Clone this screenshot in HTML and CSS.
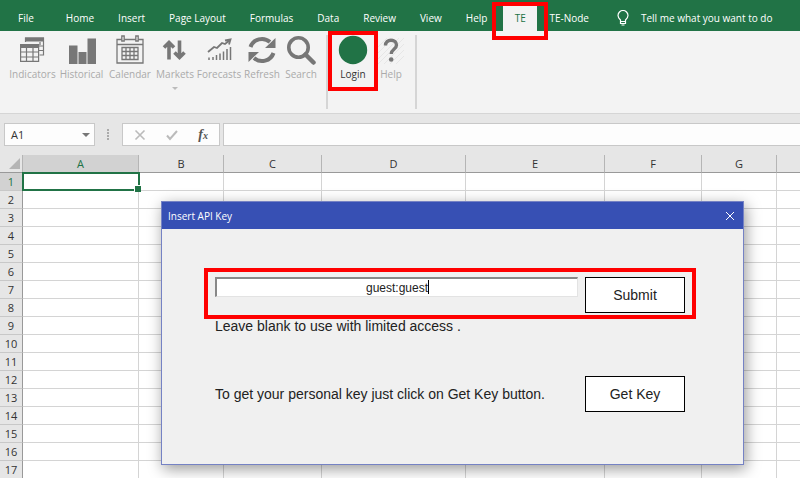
FILE: index.html
```html
<!DOCTYPE html>
<html lang="en">
<head>
<meta charset="utf-8">
<title>Insert API Key</title>
<link rel="stylesheet" href="styles.css">
</head>
<body>
<nav class="tabs">
  <a class="tab file" href="#">File</a>
  <a class="tab" href="#">Home</a>
  <a class="tab" href="#">Insert</a>
  <a class="tab" href="#">Page Layout</a>
  <a class="tab" href="#">Formulas</a>
  <a class="tab" href="#">Data</a>
  <a class="tab" href="#">Review</a>
  <a class="tab" href="#">View</a>
  <a class="tab" href="#">Help</a>
  <a class="tab active marked" href="#">TE</a>
  <a class="tab" href="#">TE-Node</a>
  <a class="tab tell" href="#">
    <svg width="12" height="16" viewBox="0 0 12 16" fill="none" stroke="#fff" stroke-width="1.2"><path d="M3.5 11.5V10C2 8.500 1 7.300 1 5.500a5 5 0 0 1 10 0C11 7.300 10 8.500 8.500 10v1.500zM3.500 11.500v2h5v-2M4.500 15h3"/></svg>
    Tell me what you want to do</a>
</nav>

<div class="ribbon">
  <div class="group data">
    <button class="tool">
      <svg width="30" height="30" viewBox="0 0 30 30" fill="none" stroke="#777" stroke-width="1.200"><path d="M7.500 7V3h18v17h-4M25 11h-4M25 15.500h-4M22 7v3"/><path d="M7 2.500h19v4H7zM2 9h19v4H2z" fill="#777" stroke="none"/><path d="M2.600 9v17.400h18V9M3 17h17M3 22h17M8.500 13v13M15 13v13"/></svg>
      <span>Indicators</span></button>
    <button class="tool">
      <svg width="30" height="30" viewBox="0 0 30 30" fill="#777"><path d="M2 10.500h8.500V29H2zM11.500 17h8v12h-8zM20.500 3.500H29V29h-8.500z"/></svg>
      <span>Historical</span></button>
    <button class="tool">
      <svg width="30" height="30" viewBox="0 0 30 30" fill="none" stroke="#777" stroke-width="1.300"><path d="M2 4.500h26V28H2zM2 9.500h26"/><path d="M6.800 1h2.400v5H6.800zM20.800 1h2.400v5h-2.400z" fill="#f3f3f3"/><path d="M7 12.500h16v12H7zM7 16.500h16M7 20.500h16M11 12.500v12M15 12.500v12M19 12.500v12"/></svg>
      <span>Calendar</span></button>
    <button class="tool">
      <svg width="30" height="30" viewBox="0 0 30 30" fill="none" stroke="#777" stroke-width="3.600"><path d="M9 24.500V8M4 12.500 9 7.500l5 5M19.500 5.500V22M14.500 17.500l5 5 5-5"/></svg>
      <span>Markets</span><i class="arrow"></i></button>
    <button class="tool">
      <svg width="30" height="30" viewBox="0 0 30 30" fill="none" stroke="#777" stroke-width="1.800"><path d="m4 17 6-5 3 1 5-5 3 1 5-4M21 5.500l5.500-1-1.500 5"/><path d="M5 22.500V25M9 22v3M12.500 20v5M16 18.500V25M19.500 16.500V25M23 14v11M26.500 12v13" stroke-width="1.500"/></svg>
      <span>Forecasts</span></button>
    <button class="tool">
      <svg width="30" height="30" viewBox="0 0 30 30" fill="none" stroke="#777" stroke-width="4"><path d="M3.500 12A12 11.500 0 0 1 23 7M26.500 18A12 11.500 0 0 1 7 23"/><path d="M28.500 3v10H18zM1.500 27V17H12z" fill="#777" stroke="none"/></svg>
      <span>Refresh</span></button>
    <button class="tool">
      <svg width="30" height="30" viewBox="0 0 30 30" fill="none" stroke="#777"><circle cx="12.500" cy="12.500" r="9.700" stroke-width="3.600"/><path d="m19.500 19.500 8 8" stroke-width="4.500" stroke-linecap="round"/></svg>
      <span>Search</span></button>
  </div>
  <div class="group account">
    <button class="tool login marked">
      <svg width="30" height="30" viewBox="0 0 30 30"><circle cx="15" cy="15" r="14.200" fill="#217346"/></svg>
      <span>Login</span></button>
    <button class="tool">
      <svg width="30" height="30" viewBox="0 0 30 30" fill="none"><path d="m2 12 9-9M2 18 17 3M2 24 23 3M2 29 28 3M8 29 28 9M14 29l14-14M20 29l8-8" stroke="#e6e6e6"/><path d="M9.500 10.500c0-3.500 2.500-5.300 5.500-5.300 3.200 0 5.500 2 5.500 4.800 0 4.500-5.300 4-5.300 9" stroke="#777" stroke-width="3.400"/><circle cx="15.200" cy="24.500" r="2.300" fill="#777"/></svg>
      <span>Help</span></button>
  </div>
</div>

<div class="formula-bar">
  <button class="name-box" aria-label="Name box">A1<i class="arrow dark"></i></button>
  <svg class="grip" width="3" height="12" viewBox="0 0 3 12" fill="#aaa"><path d="M0 0h2v2H0zM0 3h2v2H0zM0 6h2v2H0zM0 9h2v2H0z"/></svg>
  <div class="entry-tools">
    <button aria-label="Cancel"><svg width="12" height="12" viewBox="0 0 12 12" fill="none" stroke="#bbb" stroke-width="1.600"><path d="m1.500 1.500 9 9m0-9-9 9"/></svg></button>
    <button aria-label="Enter"><svg width="12" height="12" viewBox="0 0 12 12" fill="none" stroke="#bbb" stroke-width="2"><path d="m1 6.500 3 3.500 7-8"/></svg></button>
    <button class="fx" aria-label="Insert function">f<sub>x</sub></button>
  </div>
  <input class="formula" type="text" aria-label="Formula">
</div>

<main class="workspace">
  <table class="sheet">
    <colgroup><col class="c-row"><col class="c-a"><col class="c-b"><col class="c-c"><col class="c-d"><col class="c-e"><col class="c-f"><col class="c-g"><col></colgroup>
    <thead><tr><th class="corner"><svg width="11" height="11" viewBox="0 0 11 11"><path d="M11 0v11H0z" fill="#b5b5b5"/></svg></th><th class="on">A</th><th>B</th><th>C</th><th>D</th><th>E</th><th>F</th><th>G</th><th></th></tr></thead>
    <tbody>
      <tr><th class="on">1</th><td class="cursor"></td><td></td><td></td><td></td><td></td><td></td><td></td><td></td></tr>
      <tr><th>2</th><td></td><td></td><td></td><td></td><td></td><td></td><td></td><td></td></tr>
      <tr><th>3</th><td></td><td></td><td></td><td></td><td></td><td></td><td></td><td></td></tr>
      <tr><th>4</th><td></td><td></td><td></td><td></td><td></td><td></td><td></td><td></td></tr>
      <tr><th>5</th><td></td><td></td><td></td><td></td><td></td><td></td><td></td><td></td></tr>
      <tr><th>6</th><td></td><td></td><td></td><td></td><td></td><td></td><td></td><td></td></tr>
      <tr><th>7</th><td></td><td></td><td></td><td></td><td></td><td></td><td></td><td></td></tr>
      <tr><th>8</th><td></td><td></td><td></td><td></td><td></td><td></td><td></td><td></td></tr>
      <tr><th>9</th><td></td><td></td><td></td><td></td><td></td><td></td><td></td><td></td></tr>
      <tr><th>10</th><td></td><td></td><td></td><td></td><td></td><td></td><td></td><td></td></tr>
      <tr><th>11</th><td></td><td></td><td></td><td></td><td></td><td></td><td></td><td></td></tr>
      <tr><th>12</th><td></td><td></td><td></td><td></td><td></td><td></td><td></td><td></td></tr>
      <tr><th>13</th><td></td><td></td><td></td><td></td><td></td><td></td><td></td><td></td></tr>
      <tr><th>14</th><td></td><td></td><td></td><td></td><td></td><td></td><td></td><td></td></tr>
      <tr><th>15</th><td></td><td></td><td></td><td></td><td></td><td></td><td></td><td></td></tr>
      <tr><th>16</th><td></td><td></td><td></td><td></td><td></td><td></td><td></td><td></td></tr>
      <tr><th>17</th><td></td><td></td><td></td><td></td><td></td><td></td><td></td><td></td></tr>
    </tbody>
  </table>

  <form class="dialog" role="dialog" aria-labelledby="dialog-title">
    <header class="title-bar">
      <span id="dialog-title">Insert API Key</span>
      <button type="button" class="close" aria-label="Close"><svg width="10" height="10" viewBox="0 0 10 10" fill="none" stroke="#fff" stroke-width="1"><path d="m1 1 8 8m0-8-8 8"/></svg></button>
    </header>
    <div class="dialog-body">
      <div class="row key-row">
        <span class="key-field"><input id="key" type="text" value="guest:guest" aria-labelledby="dialog-title"><i class="caret"></i></span>
        <button type="button" class="action">Submit</button>
      </div>
      <label class="hint" for="key">Leave blank to use with limited access .</label>
      <div class="row">
        <p>To get your personal key just click on Get Key button.</p>
        <button type="button" class="action">Get Key</button>
      </div>
    </div>
  </form>
</main>
</body>
</html>
```

FILE: styles.css
```css
* { box-sizing: border-box; }

body {
  margin: 0;
  height: 100vh;
  overflow: hidden;
  display: flex;
  flex-direction: column;
  background: #e6e6e6;
  font: 11px/16px "Open Sans", "Noto Sans", sans-serif;
  color: #333;
}

button, input { font: inherit; color: inherit; margin: 0; padding: 0; border: 0; background: none; }
svg { display: block; flex: none; }

/* Red callout frame drawn over whatever it surrounds */
.marked { position: relative; }
.marked::after, .key-row::after {
  content: "";
  position: absolute;
  z-index: 3;
  border: 4px solid #f00;
}

/* Tabs */
.tabs {
  display: flex;
  flex: none;
  height: 31px;
  padding: 5px 0 0 18px;
  background: #217346;
  font-size: 10px;
  font-weight: 500;
}
.tab {
  display: flex;
  align-items: center;
  margin-right: 24px;
  padding-bottom: 1px;
  color: #fff;
  text-decoration: none;
  white-space: nowrap;
}
.tab.file { margin-right: 32px; }
.tab.active {
  justify-content: center;
  width: 34px;
  margin: 0 12px 0 -8px;
  background: #f3f3f3;
  color: #217346;
}
.tab.active::after { inset: -3px -11px -9px; }
.tab.tell { gap: 12px; margin: 0 0 0 4px; }

/* Ribbon */
.ribbon {
  display: flex;
  flex: none;
  height: 83px;
  padding: 4px 0 4px 8px;
  background: #f3f3f3;
  border-bottom: 1px solid #d5d5d5;
  font-size: 10px;
}
.group { display: grid; border-right: 2px solid #d5d5d5; }
.data { grid-template-columns: 49px 49px 48px 42px 46px 40px 38px; padding-right: 6px; }
.account { grid-template-columns: 50px 26px; padding-right: 11px; }
.tool {
  display: flex;
  flex-direction: column;
  align-items: center;
  color: #aaa;
  line-height: 18px;
}
.account .tool:last-child svg { margin: 0 -2px; }
.login { color: #333; }
.login::after { inset: -4px 0 18px; }
.arrow { border: 3px solid transparent; border-top-color: #bbb; border-bottom: 0; }
.tool .arrow { margin-top: 4px; }
.arrow.dark { border-width: 4px 4px 0; border-top-color: #777; }

/* Formula bar */
.formula-bar {
  display: flex;
  flex: none;
  align-items: center;
  height: 41px;
  padding: 0 0 0 4px;
}
.name-box, .entry-tools, .formula {
  height: 23px;
  background: #fdfdfd;
  border: 1px solid #c8c8c8;
}
.name-box {
  display: flex;
  align-items: center;
  justify-content: space-between;
  width: 91px;
  padding: 0 4px 0 6px;
}
.grip { margin: 0 12px; }
.entry-tools {
  display: flex;
  align-items: center;
  justify-content: space-between;
  width: 98px;
  padding: 0 11px;
}
.fx { font: italic bold 14px/16px "Liberation Serif", serif; color: #555; }
.fx sub { font-size: 10px; line-height: 1px; vertical-align: baseline; }
.formula { flex: 1; min-width: 0; margin-left: 3px; border-right: 0; padding: 0 6px; }

/* Sheet */
.workspace { position: relative; flex: 1; min-height: 0; }
.sheet { width: 100%; table-layout: fixed; border-collapse: separate; border-spacing: 0; }
.c-row { width: 23px; }
.c-a { width: 116px; }
.c-b { width: 85px; }
.c-c { width: 98px; }
.c-d { width: 144px; }
.c-e { width: 139px; }
.c-f { width: 97px; }
.c-g { width: 75px; }
.sheet th, .sheet td { height: 18px; padding: 0; }
.sheet th {
  background: #e6e6e6;
  border-right: 1px solid #b5b5b5;
  font-weight: 400;
  line-height: 16px;
}
.sheet thead th { border-bottom: 1px solid #999; }
.sheet tbody th { border-right-color: #999; border-bottom: 1px solid #c8c8c8; }
.sheet td { background: #fff; border: solid #d4d4d4; border-width: 0 1px 1px 0; }
.sheet tr > :last-child { border-right: 0; }
.sheet .on { background: #d2d2d2; color: #217346; }
.corner svg { margin-left: 9px; }
.sheet .cursor { position: relative; }
.cursor::before { content: ""; position: absolute; inset: -1px -2px -1px -1px; border: 2px solid #217346; }
.cursor::after {
  content: "";
  position: absolute;
  right: -3px;
  bottom: -2px;
  width: 6px;
  height: 6px;
  background: #217346;
  border: solid #fff;
  border-width: 1px 0 0 1px;
}

/* Dialog */
.dialog {
  position: absolute;
  left: 161px;
  top: 46px;
  width: 583px;
  background: #f0f0f0;
  border: 1px solid #7582c4;
  box-shadow: 2px 4px 14px rgba(0, 0, 0, .4);
  color: #222;
}
.title-bar {
  display: flex;
  align-items: center;
  justify-content: space-between;
  height: 27px;
  padding: 0 8px 0 6px;
  background: #3750b4;
  color: #fff;
  font-size: 10px;
}
.dialog-body {
  padding: 48px 58px 52px 53px;
  font: 14px/18px "Liberation Sans", Arial, sans-serif;
}
.row { display: flex; align-items: center; justify-content: space-between; }
.row p { margin: 0; }
.key-row { position: relative; align-items: flex-start; gap: 7px; }
.key-row::after { inset: -9px -11px -6px; pointer-events: none; }
.key-field { position: relative; display: flex; flex: 1; }
.key-field input {
  width: 100%;
  height: 20px;
  background: #fff;
  border: solid;
  border-width: 2px 1px 1px 2px;
  border-color: #888 #e3e3e3 #e3e3e3 #888;
  font-size: 12px;
  text-align: center;
}
.caret { position: absolute; left: 213px; top: 3px; width: 1px; height: 14px; background: #000; }
.action {
  width: 100px;
  height: 36px;
  background: #fff;
  border: 1px solid #000;
}
.hint { display: block; margin: 4px 0 41px; }
```
